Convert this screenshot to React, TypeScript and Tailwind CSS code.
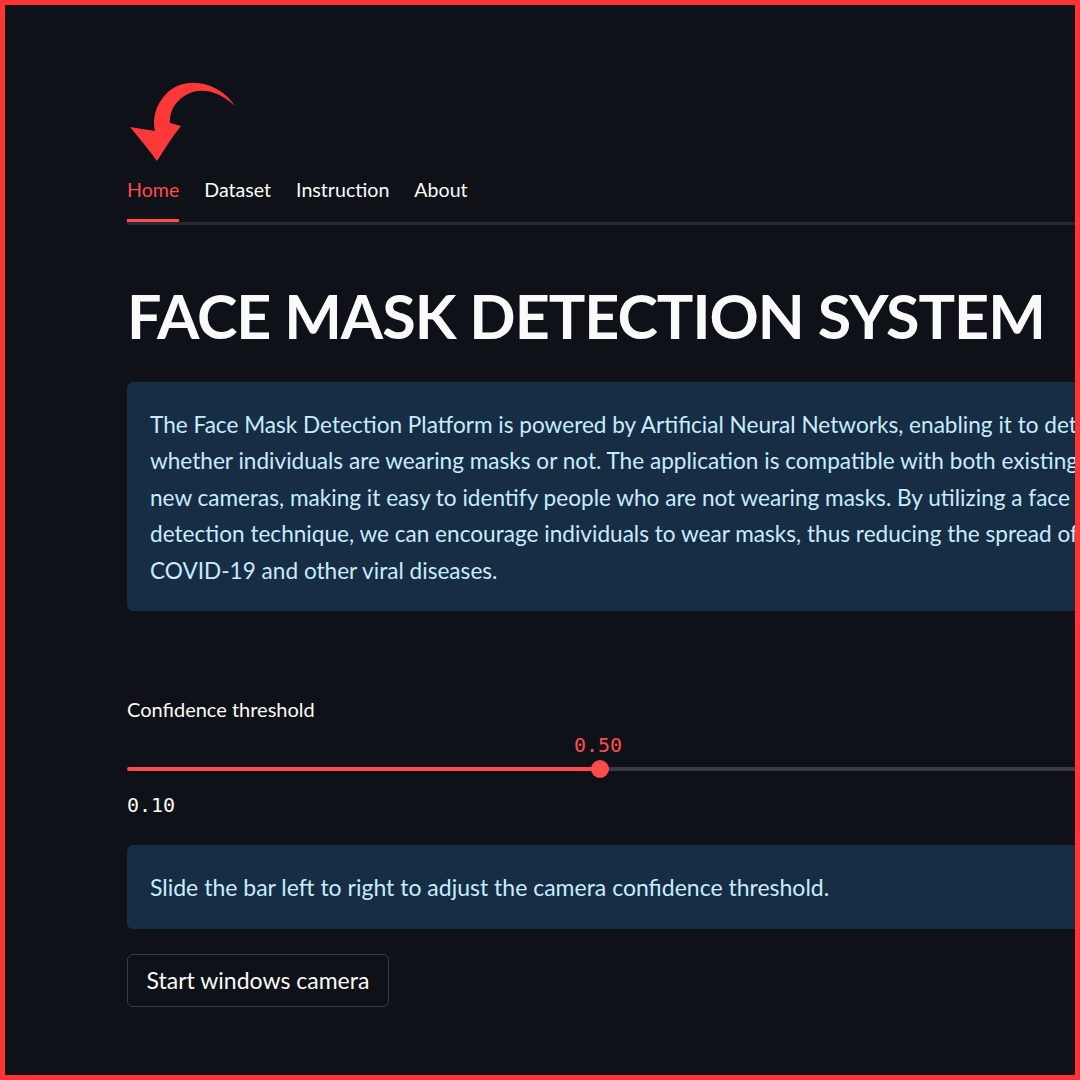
import React from "react";

const sans = { fontFamily: '"Lato", "Noto Sans", sans-serif' };
const mono = { fontFamily: '"DejaVu Sans Mono", "Liberation Mono", monospace' };

function Arrow() {
  return (
    <svg className="absolute left-0 top-0" width="300" height="200" viewBox="0 0 300 200">
      <path
        d="M235,106 C220,82 185,74 166,94 C156,105 152,118 155,131 L130,127 C140,139 150,151 157,161 C164,150 172,137 181,126 L170,123 C169,111 176,99 190,93 C206,87 222,94 235,106 Z"
        fill="#ff3838"
      />
    </svg>
  );
}

export default function App() {
  return (
    <div className="relative w-[1080px] h-[1080px] overflow-hidden bg-[#0e1117]" style={sans}>
      <div className="w-[1300px] pl-[127px] pt-[170px]">
        {/* tabs */}
        <div className="flex gap-[25px] border-b-[3px] border-[#262730] w-[1200px]">
          <div className="h-[52px] -mb-[3px] border-b-[3px] border-[#ff4b4b] leading-[40px] text-[19.6px] text-[#ff4b4b]">
            Home
          </div>
          <div className="h-[52px] leading-[40px] text-[19.6px] text-[#fafafa]">Dataset</div>
          <div className="h-[52px] leading-[40px] text-[19.6px] text-[#fafafa]">Instruction</div>
          <div className="h-[52px] leading-[40px] text-[19.6px] text-[#fafafa]">About</div>
        </div>

        {/* title */}
        <h1 className="mt-[51px] h-[106px] leading-[80px] text-[61px] tracking-[-1px] font-bold text-[#fafafa] whitespace-nowrap">
          FACE MASK DETECTION SYSTEM
        </h1>

        {/* info */}
        <div className="w-[1100px] rounded-md bg-[#172d43] pl-[23px] pt-[25px] pb-[22px] text-[22.6px] leading-[36.4px] text-[#c7ebff] whitespace-nowrap">
          <div>The Face Mask Detection Platform is powered by Artificial Neural Networks, enabling it to detect</div>
          <div>whether individuals are wearing masks or not. The application is compatible with both existing and</div>
          <div>new cameras, making it easy to identify people who are not wearing masks. By utilizing a face mask</div>
          <div>detection technique, we can encourage individuals to wear masks, thus reducing the spread of</div>
          <div>COVID-19 and other viral diseases.</div>
        </div>

        {/* slider */}
        <div className="mt-[84px] h-[28px] leading-[28px] text-[20px] text-[#fafafa]">Confidence threshold</div>
        <div className="mt-[10px] h-[24px] leading-[24px] pl-[447px] text-[20px] text-[#ff4b4b]" style={mono}>
          0.50
        </div>
        <div className="relative h-[24px] w-[1100px] flex items-center">
          <div className="h-[4px] w-[473px] rounded-l-full bg-[#ff4b4b]" />
          <div className="h-[4px] flex-1 bg-[#3a3b42]" />
          <div className="absolute left-[464px] top-[3px] h-[18px] w-[18px] rounded-full bg-[#ff4b4b]" />
        </div>
        <div className="mt-[12px] h-[24px] leading-[24px] text-[20px] text-[#fafafa]" style={mono}>
          0.10
        </div>

        {/* info 2 */}
        <div className="mt-[28px] w-[1100px] h-[84px] rounded-md bg-[#172d43] pl-[23px] flex items-center text-[23px] text-[#c7ebff] whitespace-nowrap">
          Slide the bar left to right to adjust the camera confidence threshold.
        </div>

        {/* button */}
        <button className="mt-[25px] h-[53px] w-[262px] rounded-md border border-[#3a3c44] bg-[#0e1117] text-[23px] text-[#fafafa] flex items-center justify-center">
          Start windows camera
        </button>
      </div>

      <Arrow />
      {/* frame */}
      <div className="pointer-events-none absolute inset-0 border-[5px] border-[#ff3535]" />
    </div>
  );
}
